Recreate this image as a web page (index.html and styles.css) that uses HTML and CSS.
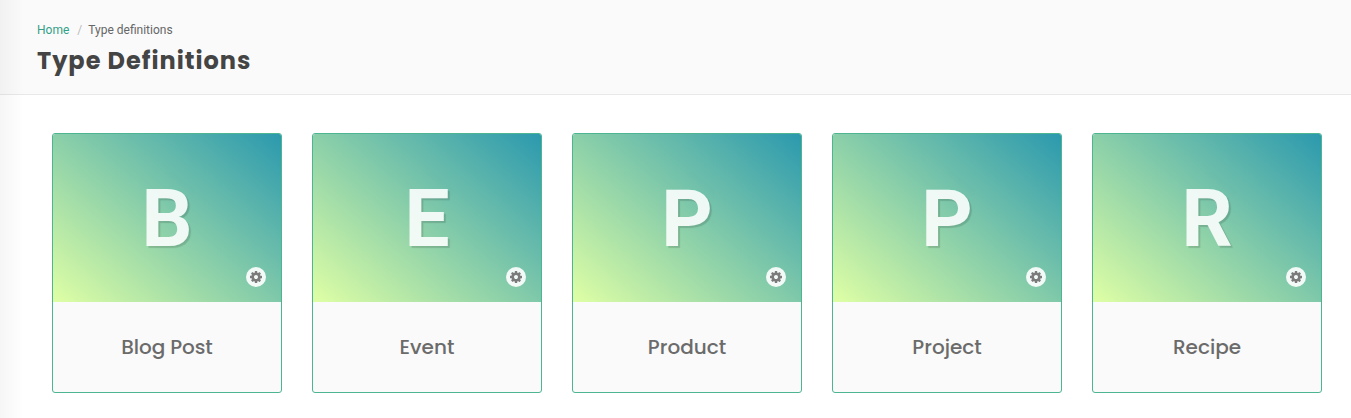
FILE: index.html
```html
<!DOCTYPE html>
<html lang="en">
<head>
<meta charset="utf-8">
<title>Type Definitions</title>
<link rel="stylesheet" href="styles.css">
</head>
<body>
<svg class="sprite" aria-hidden="true">
  <symbol id="gear" viewBox="0 0 1536 1536">
    <path d="M1024 768q0-106-75-181t-181-75-181 75-75 181 75 181 181 75 181-75 75-181zm512-109v222q0 12-8 23t-20 13l-185 28q-19 54-39 91 35 50 107 138 10 12 10 25t-9 23q-27 37-99 108t-94 71q-12 0-26-9l-138-108q-44 23-91 38-16 136-29 186-7 28-36 28H657q-14 0-24.500-8.500T621 1506l-28-184q-49-16-90-37l-141 107q-10 9-25 9-14 0-25-11-126-114-165-168-7-10-7-23 0-12 8-23 15-21 51-66.500t54-70.500q-27-50-41-99L29 913q-13-2-21-12.500T0 877V655q0-12 8-23t19-13l186-28q14-46 39-92-40-57-107-138-10-12-10-24 0-10 9-23 26-36 98.500-107.500T337 135q13 0 26 10l138 107q44-23 91-38 16-136 29-186 7-28 36-28h222q14 0 24.500 8.500T915 30l28 184q49 16 90 37l142-107q9-9 24-9 13 0 25 10 129 119 165 170 7 8 7 22 0 12-8 23-15 21-51 66.500t-54 70.500q26 50 41 98l183 28q13 2 21 12.500t8 23.500z"/>
  </symbol>
</svg>
<header class="page-header">
  <nav class="breadcrumb"><a class="home" href="#">Home</a><span class="slash">/</span><span>Type definitions</span></nav>
  <h1 class="title">Type Definitions</h1>
</header>
<main class="cards">
  <article class="card">
    <div class="cover"><span class="letter">B</span><span class="settings"><svg class="gear"><use href="#gear"/></svg></span></div>
    <h2 class="name tight">Blog Post</h2>
  </article>
  <article class="card">
    <div class="cover"><span class="letter">E</span><span class="settings"><svg class="gear"><use href="#gear"/></svg></span></div>
    <h2 class="name">Event</h2>
  </article>
  <article class="card">
    <div class="cover"><span class="letter">P</span><span class="settings"><svg class="gear"><use href="#gear"/></svg></span></div>
    <h2 class="name">Product</h2>
  </article>
  <article class="card">
    <div class="cover"><span class="letter">P</span><span class="settings"><svg class="gear"><use href="#gear"/></svg></span></div>
    <h2 class="name">Project</h2>
  </article>
  <article class="card">
    <div class="cover"><span class="letter">R</span><span class="settings"><svg class="gear"><use href="#gear"/></svg></span></div>
    <h2 class="name">Recipe</h2>
  </article>
</main>
<div class="edge-shade"></div>
</body>
</html>
```

FILE: styles.css
```css
* { box-sizing: border-box; }
body {
  margin: 0;
  height: 418px;
  overflow: hidden;
  background: #fff;
  font-family: Roboto, sans-serif;
  color: #666;
}
.sprite { display: none; }
.page-header {
  height: 95px;
  padding: 22px 37px 0;
  background: #fafafa;
  border-bottom: 1px solid #e8e8e8;
}
.breadcrumb {
  display: flex;
  font-size: 12px;
  line-height: 16px;
}
.home { color: #35a088; text-decoration: none; }
.slash { margin: 0 6px 0 8px; color: #bbb; }
.title {
  margin: 5px 0 0;
  font: 700 24px/36px Poppins, Inter, sans-serif;
  letter-spacing: 1px;
  color: #444;
}
.cards {
  display: flex;
  gap: 30px;
  padding: 38px 29px 0 52px;
}
.card {
  flex: 0 0 230px;
  height: 260px;
  border: 1px solid #4db592;
  border-radius: 3px;
  background: #fafafa;
  overflow: hidden;
}
.cover {
  position: relative;
  display: flex;
  align-items: center;
  justify-content: center;
  height: 168px;
  background: linear-gradient(40deg, #dfffa5, #2b99ae);
}
.letter {
  padding-top: 1px;
  font-size: 80px;
  font-weight: 700;
  line-height: 94px;
  color: #fff;
  opacity: .88;
  text-shadow: 2px 2px 1px rgba(0, 0, 0, .16);
}
.settings {
  position: absolute;
  right: 15px;
  bottom: 15px;
  display: flex;
  align-items: center;
  justify-content: center;
  width: 20px;
  height: 20px;
  border-radius: 50%;
  background: rgba(255, 255, 255, .9);
}
.gear { width: 12px; height: 12px; fill: #7b7b7b; }
.name {
  margin: 0;
  font: 500 20px/90px Poppins, Inter, sans-serif;
  text-align: center;
  color: #6b6b6b;
}
.tight { letter-spacing: -.1px; }
.edge-shade {
  position: absolute;
  left: 0;
  top: 0;
  width: 24px;
  height: 418px;
  background: linear-gradient(90deg, rgba(0, 0, 0, .035), transparent);
}
```
